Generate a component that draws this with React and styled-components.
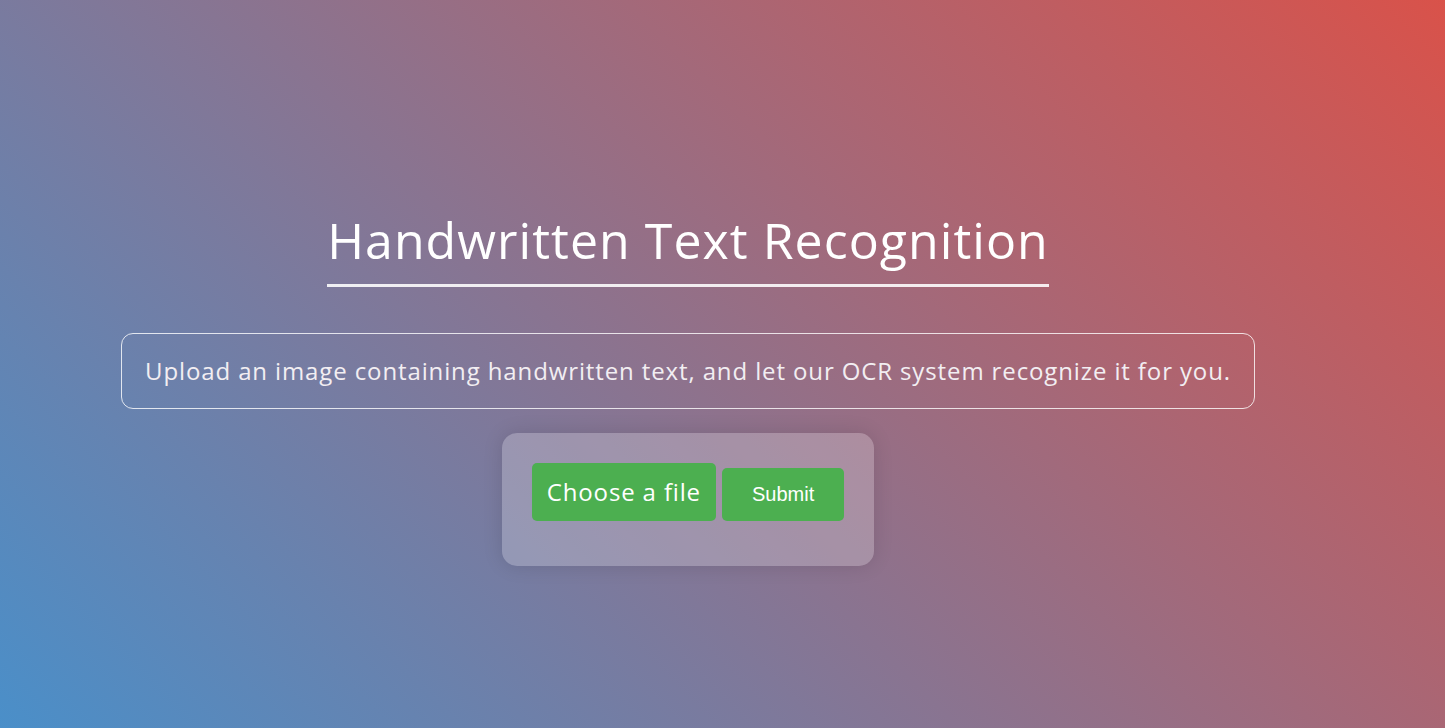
import React from "react";
import styled, { createGlobalStyle } from "styled-components";

const GlobalStyle = createGlobalStyle`
  html, body {
    margin: 0;
    padding: 0;
  }
  body {
    min-height: 100vh;
    background: linear-gradient(45deg, #4a8fc9, #d9524a);
    font-family: "Open Sans", "DejaVu Sans", sans-serif;
    color: #ffffff;
  }
`;

const Page = styled.main`
  width: 1376px;
  min-height: 100vh;
  box-sizing: border-box;
  padding-top: 206px;
  display: flex;
  flex-direction: column;
  align-items: center;
`;

const Title = styled.h1`
  margin: 0;
  padding-bottom: 10px;
  font-size: 50px;
  font-weight: 500;
  line-height: 68px;
  letter-spacing: 1.05px;
  border-bottom: 3px solid rgba(255, 255, 255, 0.88);
`;

const Intro = styled.p`
  margin: 46px 0 24px;
  padding: 21px 23px;
  font-size: 24px;
  line-height: 32px;
  letter-spacing: 0.88px;
  color: #f2eef2;
  border: 1px solid rgba(255, 255, 255, 0.8);
  border-radius: 12px;
`;

const UploadPanel = styled.form`
  display: flex;
  align-items: flex-end;
  gap: 6px;
  padding: 30px 30px 45px;
  background: rgba(255, 255, 255, 0.22);
  border-radius: 15px;
  box-shadow: 0 0 20px rgba(0, 0, 0, 0.12);
`;

const FileInput = styled.input`
  display: none;
`;

const FileLabel = styled.label`
  padding: 15px;
  font-size: 24px;
  line-height: 28px;
  letter-spacing: 0.85px;
  color: #ffffff;
  background: #4caf50;
  border-radius: 5px;
  cursor: pointer;
`;

const SubmitButton = styled.button`
  padding: 15px 30px;
  font-family: "Liberation Sans", Arial, sans-serif;
  font-size: 20px;
  line-height: 23px;
  color: #ffffff;
  background: #4caf50;
  border: none;
  border-radius: 5px;
  cursor: pointer;
`;

export default function App() {
  return (
    <>
      <GlobalStyle />
      <Page>
        <Title>Handwritten Text Recognition</Title>
        <Intro>
          Upload an image containing handwritten text, and let our OCR system
          recognize it for you.
        </Intro>
        <UploadPanel onSubmit={e => e.preventDefault()}>
          <FileInput type="file" id="file" accept="image/*" />
          <FileLabel htmlFor="file">Choose a file</FileLabel>
          <SubmitButton type="submit">Submit</SubmitButton>
        </UploadPanel>
      </Page>
    </>
  );
}
